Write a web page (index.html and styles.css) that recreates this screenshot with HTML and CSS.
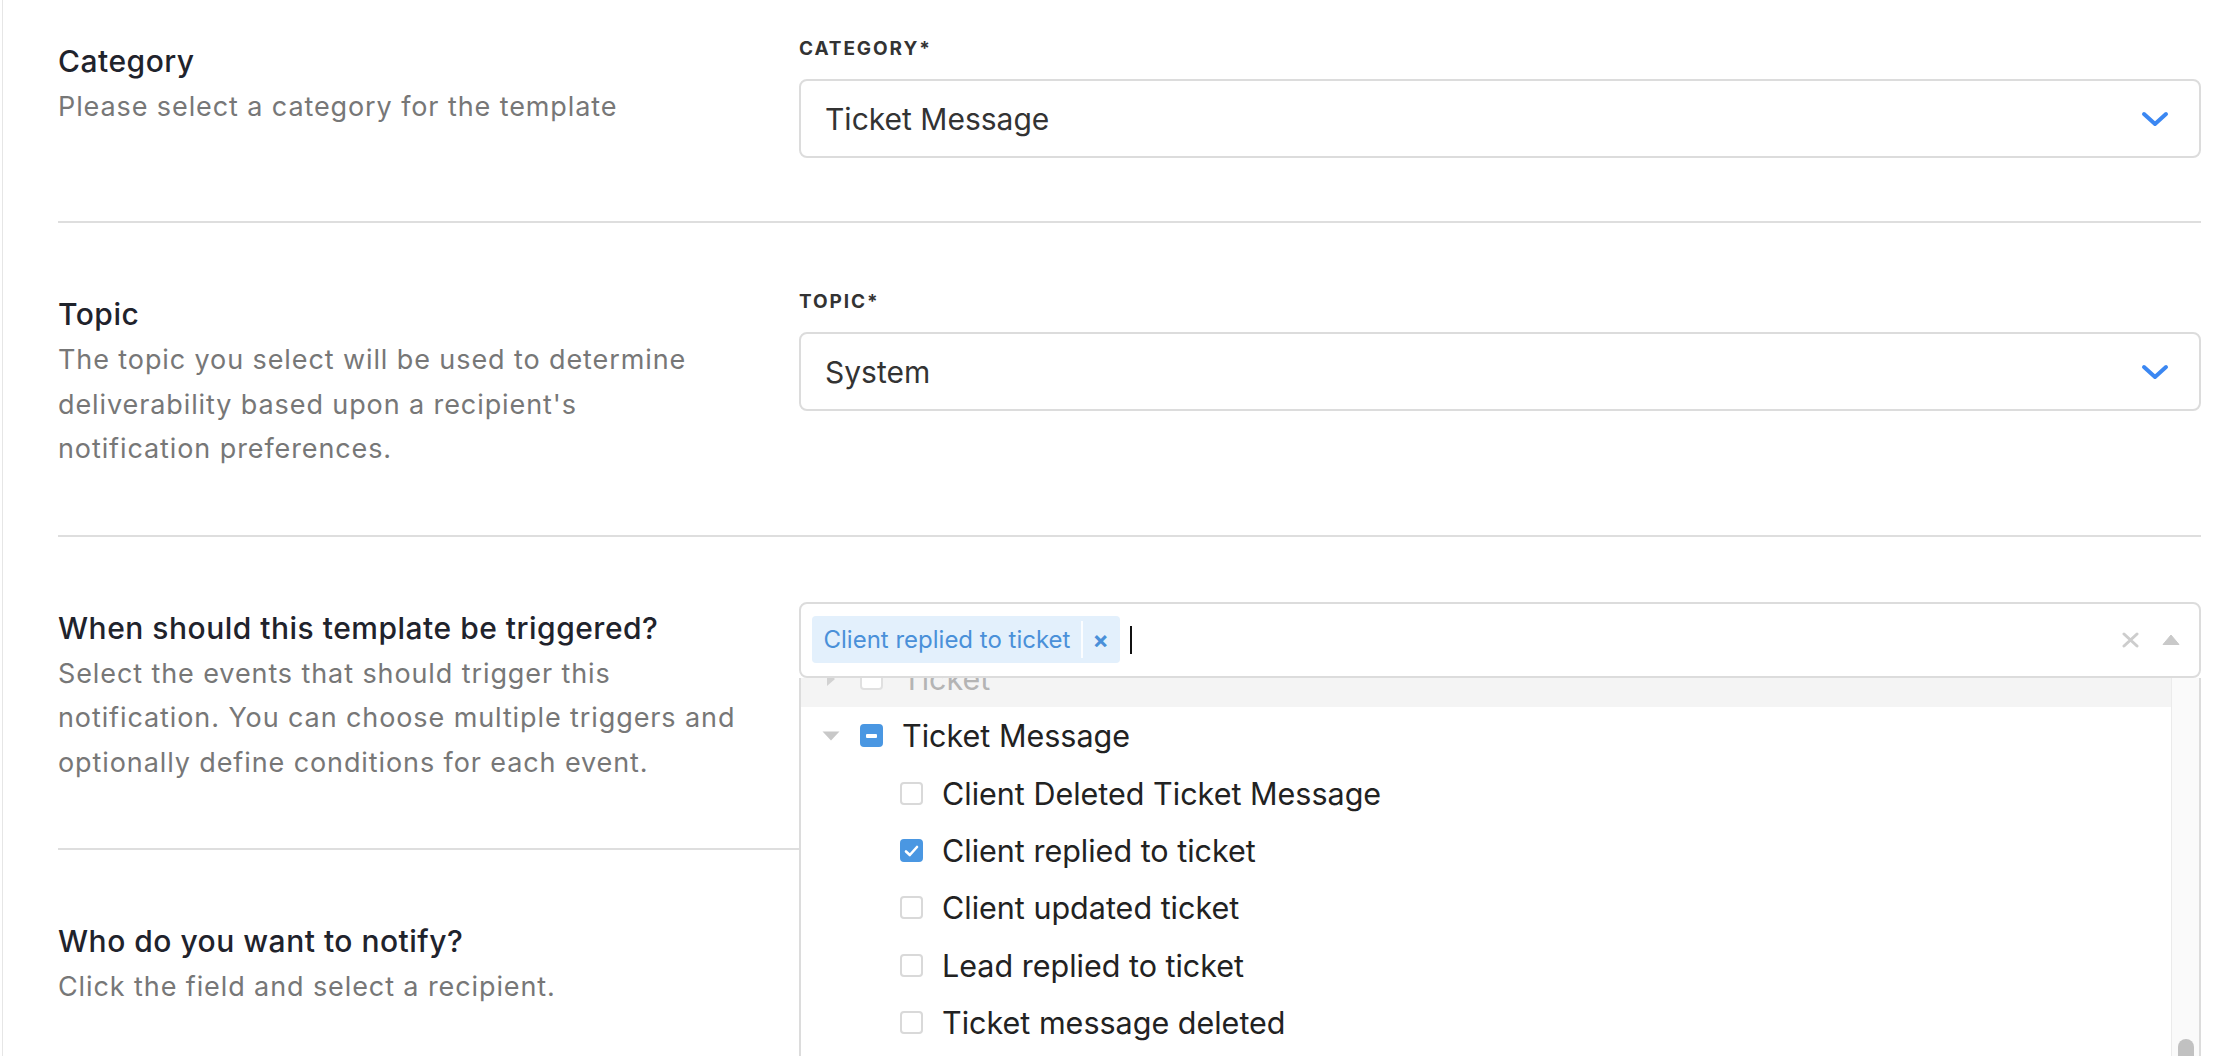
FILE: index.html
```html
<!DOCTYPE html>
<html lang="en">
<head>
<meta charset="utf-8">
<title>Notification template</title>
<link rel="stylesheet" href="styles.css">
</head>
<body>
<div class="page">

  <section class="field-row first">
    <div class="field-info">
      <h3 class="field-title">Category</h3>
      <p class="field-desc">Please select a category for the template</p>
    </div>
    <div class="field-control">
      <label class="field-label">CATEGORY*</label>
      <div class="select">
        <span class="select-value">Ticket Message</span>
        <svg class="chev" width="28" height="16" viewBox="0 0 28 16"><path d="M3 3 L14 13 L25 3" fill="none" stroke="#3b87f2" stroke-width="4" stroke-linecap="round" stroke-linejoin="round"/></svg>
      </div>
    </div>
  </section>

  <section class="field-row">
    <div class="field-info">
      <h3 class="field-title">Topic</h3>
      <p class="field-desc">The topic you select will be used to determine deliverability based upon a recipient's notification preferences.</p>
    </div>
    <div class="field-control">
      <label class="field-label">TOPIC*</label>
      <div class="select">
        <span class="select-value">System</span>
        <svg class="chev" width="28" height="16" viewBox="0 0 28 16"><path d="M3 3 L14 13 L25 3" fill="none" stroke="#3b87f2" stroke-width="4" stroke-linecap="round" stroke-linejoin="round"/></svg>
      </div>
    </div>
  </section>

  <section class="field-row">
    <div class="field-info">
      <h3 class="field-title">When should this template be triggered?</h3>
      <p class="field-desc">Select the events that should trigger this notification. You can choose multiple triggers and optionally define conditions for each event.</p>
    </div>
    <div class="field-control">
      <div class="multi">
        <div class="multi-control">
          <span class="chip">
            <span class="chip-label">Client replied to ticket</span>
            <span class="chip-remove">×</span>
          </span>
          <span class="caret"></span>
          <span class="multi-icons">
            <svg width="19" height="16" viewBox="0 0 19 16"><path d="M3 2 L16 14 M16 2 L3 14" stroke="#cdcdcd" stroke-width="3" stroke-linecap="round"/></svg>
            <svg width="18" height="11" viewBox="0 0 18 11"><path d="M9 1 L17 10.5 L1 10.5 Z" fill="#c9c9c9" stroke="#c9c9c9" stroke-width="1" stroke-linejoin="round"/></svg>
          </span>
        </div>

        <div class="menu">
          <div class="menu-list">
            <div class="menu-rows">
              <div class="opt lvl0 dim active">
                <span class="toggle"><svg width="10" height="16" viewBox="0 0 10 16"><path d="M1 1 L9 8 L1 15 Z" fill="#d2d2d2"/></svg></span>
                <span class="cb"></span>
                <span class="opt-text">Ticket</span>
              </div>
              <div class="opt lvl0">
                <span class="toggle"><svg width="18" height="10" viewBox="0 0 18 10"><path d="M0.5 0.5 L17.5 0.5 L9 9.5 Z" fill="#c8c8c8"/></svg></span>
                <span class="cb partial"><span class="bar"></span></span>
                <span class="opt-text">Ticket Message</span>
              </div>
              <div class="opt lvl1">
                <span class="cb"></span>
                <span class="opt-text">Client Deleted Ticket Message</span>
              </div>
              <div class="opt lvl1">
                <span class="cb checked"><svg width="15" height="12" viewBox="0 0 15 12"><path d="M2 6.5 L5.8 10 L13 2" fill="none" stroke="#fff" stroke-width="2.6" stroke-linecap="round" stroke-linejoin="round"/></svg></span>
                <span class="opt-text">Client replied to ticket</span>
              </div>
              <div class="opt lvl1">
                <span class="cb"></span>
                <span class="opt-text">Client updated ticket</span>
              </div>
              <div class="opt lvl1">
                <span class="cb"></span>
                <span class="opt-text">Lead replied to ticket</span>
              </div>
              <div class="opt lvl1">
                <span class="cb"></span>
                <span class="opt-text">Ticket message deleted</span>
              </div>
            </div>
          </div>
          <div class="menu-scroll"><span class="thumb"></span></div>
        </div>
      </div>
    </div>
  </section>

  <section class="field-row last">
    <div class="field-info">
      <h3 class="field-title">Who do you want to notify?</h3>
      <p class="field-desc">Click the field and select a recipient.</p>
    </div>
    <div class="field-control"></div>
  </section>

</div>
</body>
</html>
```

FILE: styles.css
```css
html, body {
  margin: 0;
  height: 100%;
  overflow: hidden;
  background: #fff;
}

body {
  font-family: Inter, "Noto Sans", "Liberation Sans", sans-serif;
  color: #222;
}

.page {
  height: 100%;
  box-sizing: border-box;
  margin-left: 2px;
  border-left: 1px solid #e6e6e6;
  padding: 0 21px 0 55px;
}

/* one settings row: explanation on the left, input on the right */
.field-row {
  display: grid;
  grid-template-columns: 741px 1fr;
  padding: 65px 0 63px;
  border-bottom: 2px solid #dedede;
}
.field-row.first { padding-top: 35px; }
.field-row.last { border-bottom: none; }

.field-info {
  padding: 6px 63px 0 0;
}

.field-title {
  margin: 0 0 4px;
  font-size: 30px;
  line-height: 40px;
  font-weight: 500;
  letter-spacing: 0.5px;
  color: #1f232c;
  white-space: nowrap;
}

.field-desc {
  margin: 0;
  font-size: 27px;
  line-height: 44.5px;
  letter-spacing: 0.9px;
  color: #777;
}

.field-label {
  display: block;
  margin-bottom: 17px;
  font-size: 19px;
  line-height: 27px;
  font-weight: 700;
  letter-spacing: 1.9px;
  color: #333;
}

/* single select */
.select {
  height: 79px;
  box-sizing: border-box;
  border: 2px solid #dcdcdc;
  border-radius: 8px;
  display: flex;
  align-items: center;
  justify-content: space-between;
  padding: 0 30px 0 24px;
}
.select-value {
  font-size: 30px;
  color: #333;
}
.chev { display: block; }

/* multi select with open tree menu */
.multi {
  position: relative;
}
.multi-control {
  position: relative;
  z-index: 2;
  height: 76px;
  box-sizing: border-box;
  border: 2px solid #dcdcdc;
  border-radius: 8px;
  background: #fff;
  display: flex;
  align-items: center;
  padding: 0 19px 0 11px;
}

.chip {
  display: flex;
  align-items: center;
  height: 47px;
  border-radius: 4px;
  background: #e3f0fc;
  color: #4a90d9;
}
.chip-label {
  font-size: 24px;
  padding: 0 11px 0 11.5px;
}
.chip-remove {
  height: 37px;
  line-height: 37px;
  border-left: 2px solid #fbfdff;
  padding: 0 11px 0 9px;
  font-size: 24px;
  font-weight: 700;
}

.caret {
  width: 2px;
  height: 28px;
  margin-left: 10px;
  background: #111;
}

.multi-icons {
  margin-left: auto;
  display: flex;
  align-items: center;
  gap: 22px;
}
.multi-icons svg { display: block; }

.menu {
  position: absolute;
  z-index: 1;
  top: 76px;
  left: 0;
  right: 0;
  height: 420px;
  box-sizing: border-box;
  border: 2px solid #dcdcdc;
  border-top: none;
  background: #fff;
  display: flex;
  overflow: hidden;
}

.menu-list {
  flex: 1;
  overflow: hidden;
}
.menu-rows {
  margin-top: -27.5px;
}

.opt {
  height: 57.3px;
  display: flex;
  align-items: center;
  font-size: 30.5px;
  color: #222;
  white-space: nowrap;
}
.opt.active { background: #f4f4f4; }
.opt.dim { color: #b4b4b4; }
.opt.dim .cb { border-color: #e0e0e0; }

.opt.lvl0 { padding-left: 21px; }
.opt.lvl1 { padding-left: 99px; }

.toggle {
  width: 18px;
  margin-right: 20px;
  display: flex;
  justify-content: center;
  align-items: center;
}
.toggle svg { display: block; }

.cb {
  flex: none;
  width: 23px;
  height: 23px;
  margin-right: 19px;
  box-sizing: border-box;
  border: 2px solid #d9d9d9;
  border-radius: 4px;
  background: #fff;
  display: flex;
  align-items: center;
  justify-content: center;
}
.cb.checked,
.cb.partial {
  background: #4a97e2;
  border-color: #4a97e2;
}
.cb svg { display: block; }
.cb .bar {
  width: 11px;
  height: 4px;
  border-radius: 1px;
  background: #fff;
}

.menu-scroll {
  width: 27px;
  flex: none;
  border-left: 1px solid #ebebeb;
  background: #fafafa;
}
.thumb {
  display: block;
  width: 16px;
  height: 80px;
  margin: 361px 0 0 6px;
  border-radius: 8px;
  background: #c1c1c1;
}
```
